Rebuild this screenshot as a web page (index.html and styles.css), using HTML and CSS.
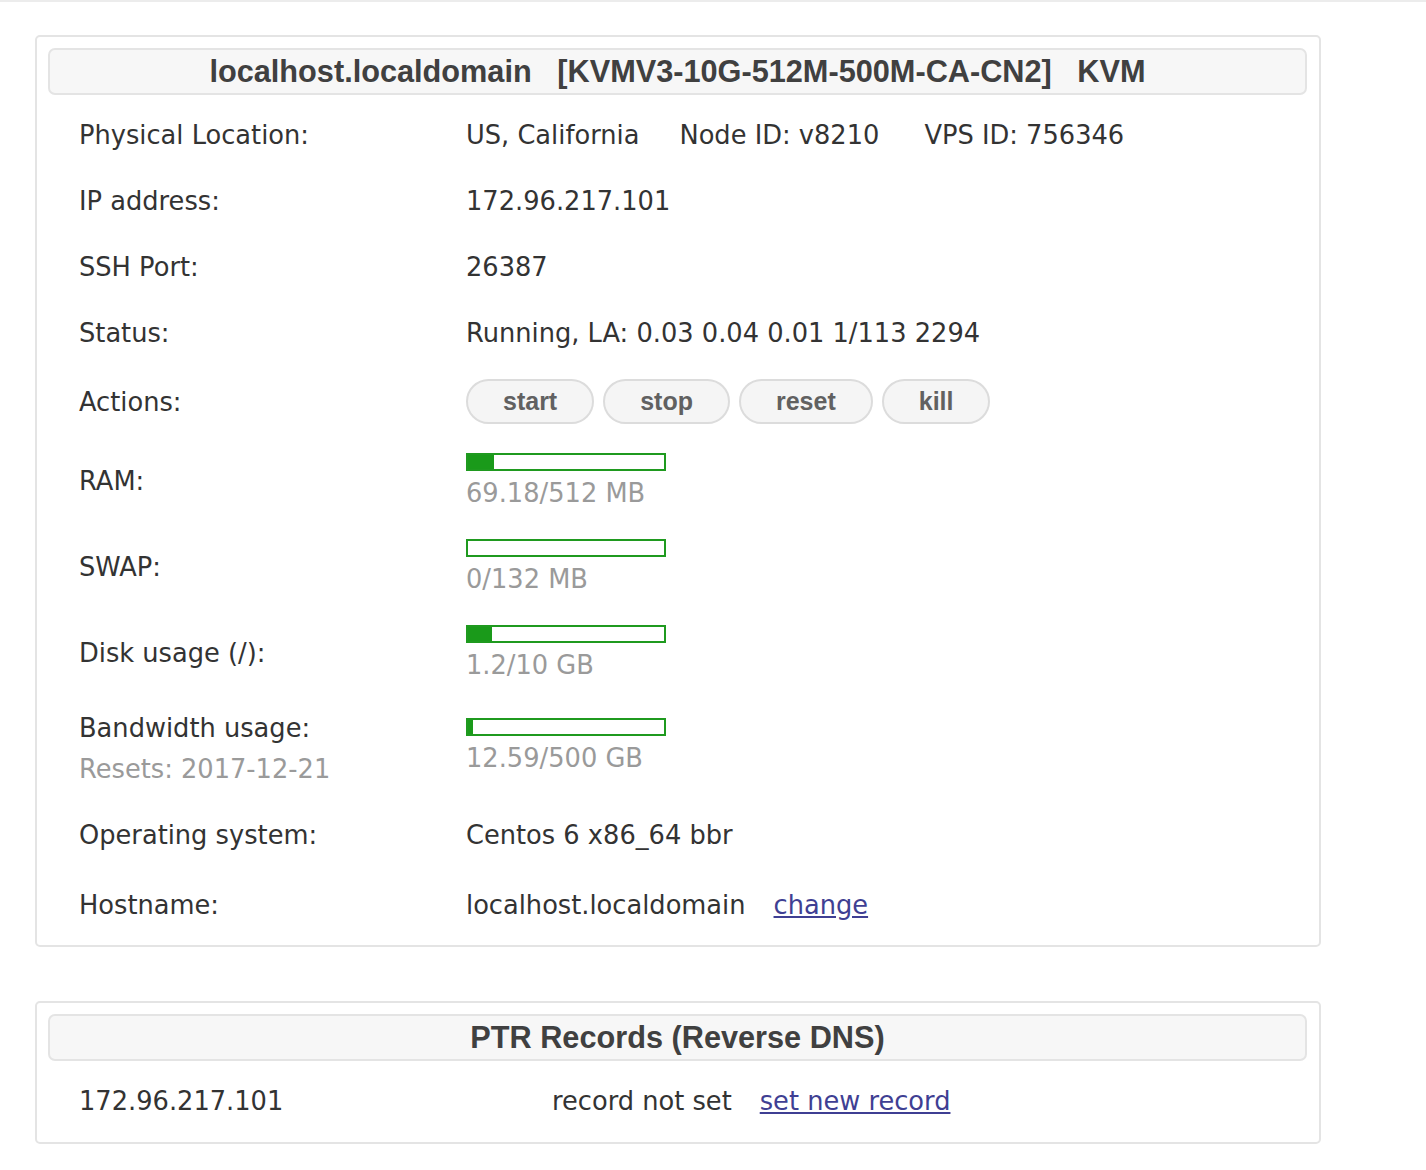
FILE: index.html
```html
<!DOCTYPE html>
<html>
<head>
<meta charset="utf-8">
<title>VPS</title>
<link rel="stylesheet" href="styles.css">
</head>
<body>
<div class="topline"></div>
<div class="page">
  <section class="box">
    <h2 class="box-head">localhost.localdomain&nbsp;&nbsp;&nbsp;[KVMV3-10G-512M-500M-CA-CN2]&nbsp;&nbsp;&nbsp;KVM</h2>
    <div class="rows">
      <div class="row">
        <div class="label">Physical Location:</div>
        <div class="value"><span class="gap">US, California</span><span class="gap gap-wide">Node ID: v8210</span><span>VPS ID: 756346</span></div>
      </div>
      <div class="row">
        <div class="label">IP address:</div>
        <div class="value">172.96.217.101</div>
      </div>
      <div class="row">
        <div class="label">SSH Port:</div>
        <div class="value">26387</div>
      </div>
      <div class="row">
        <div class="label">Status:</div>
        <div class="value">Running, LA: 0.03 0.04 0.01 1/113 2294</div>
      </div>
      <div class="row row-actions">
        <div class="label">Actions:</div>
        <div class="value buttons">
          <button class="btn">start</button>
          <button class="btn">stop</button>
          <button class="btn">reset</button>
          <button class="btn">kill</button>
        </div>
      </div>
      <div class="row row-meter">
        <div class="label">RAM:</div>
        <div class="value">
          <div class="bar"><div class="fill" style="width:13.5%"></div></div>
          <div class="muted">69.18/512 MB</div>
        </div>
      </div>
      <div class="row row-meter">
        <div class="label">SWAP:</div>
        <div class="value">
          <div class="bar"><div class="fill" style="width:0%"></div></div>
          <div class="muted">0/132 MB</div>
        </div>
      </div>
      <div class="row row-meter">
        <div class="label">Disk usage (/):</div>
        <div class="value">
          <div class="bar"><div class="fill" style="width:12%"></div></div>
          <div class="muted">1.2/10 GB</div>
        </div>
      </div>
      <div class="row row-bw">
        <div class="label">Bandwidth usage:<div class="muted resets">Resets: 2017-12-21</div></div>
        <div class="value">
          <div class="bar"><div class="fill" style="width:2.5%"></div></div>
          <div class="muted">12.59/500 GB</div>
        </div>
      </div>
      <div class="row">
        <div class="label">Operating system:</div>
        <div class="value">Centos 6 x86_64 bbr</div>
      </div>
      <div class="row row-host">
        <div class="label">Hostname:</div>
        <div class="value">localhost.localdomain<a class="link" href="#">change</a></div>
      </div>
    </div>
  </section>

  <section class="box box-ptr">
    <h2 class="box-head">PTR Records (Reverse DNS)</h2>
    <div class="ptr-row">
      <div class="ptr-ip">172.96.217.101</div>
      <div class="ptr-val">record not set<a class="link" href="#">set new record</a></div>
    </div>
  </section>
</div>
</body>
</html>
```
FILE: styles.css
```css
html, body {
  margin: 0;
  padding: 0;
  background: #fff;
}
body {
  font-family: "DejaVu Sans", Verdana, sans-serif;
  font-size: 25.7px;
  color: #333;
}
.topline {
  height: 2px;
  background: #ececec;
}
.page {
  padding: 33px 0 0 35px;
  width: 1286px;
}
.box {
  border: 2px solid #e4e4e4;
  border-radius: 5px;
  padding: 11px 12px 7px 11px;
}
.box-ptr {
  margin-top: 54px;
  padding-bottom: 8px;
}
.box-head {
  margin: 0;
  height: 43px;
  line-height: 43px;
  border: 2px solid #e4e4e4;
  border-radius: 7px;
  background: #f7f7f7;
  text-align: center;
  font-family: "Liberation Sans", Arial, sans-serif;
  font-weight: bold;
  font-size: 30.7px;
  color: #404040;
}
.rows {
  padding-top: 7px;
}
.row {
  display: grid;
  grid-template-columns: 387px 1fr;
  align-items: center;
  padding: 18px 0 18px 31px;
  line-height: 30px;
}
.row-actions {
  padding: 13px 0 13px 31px;
}
.row-meter {
  padding: 16px 0 15px 31px;
}
.row-bw {
  padding: 18px 0 18px 31px;
}
.row-bw .value {
  margin-bottom: 6px;
}
.row-host {
  padding: 22px 0 18px 31px;
}
.gap {
  margin-right: 40px;
}
.gap-wide {
  margin-right: 45px;
}
.muted {
  color: #9a9a9a;
}
.resets {
  margin-top: 11px;
}
.buttons {
  display: flex;
  gap: 9px;
}
.btn {
  height: 45px;
  padding: 0 35px;
  border: 2px solid #dcdcdc;
  border-radius: 23px;
  background: #f5f5f5;
  font-family: "Liberation Sans", Arial, sans-serif;
  font-weight: bold;
  font-size: 25px;
  color: #616161;
  cursor: pointer;
}
.bar {
  width: 196px;
  height: 14px;
  border: 2px solid #1f9a1f;
  background: #fff;
  margin-bottom: 7px;
}
.fill {
  height: 100%;
  background: #1a9a1a;
}
.link {
  margin-left: 28px;
  color: #3f3f93;
  text-decoration: underline;
}
.ptr-row {
  display: grid;
  grid-template-columns: 473px 1fr;
  align-items: center;
  padding: 25px 0 18px 31px;
  line-height: 30px;
}
```
